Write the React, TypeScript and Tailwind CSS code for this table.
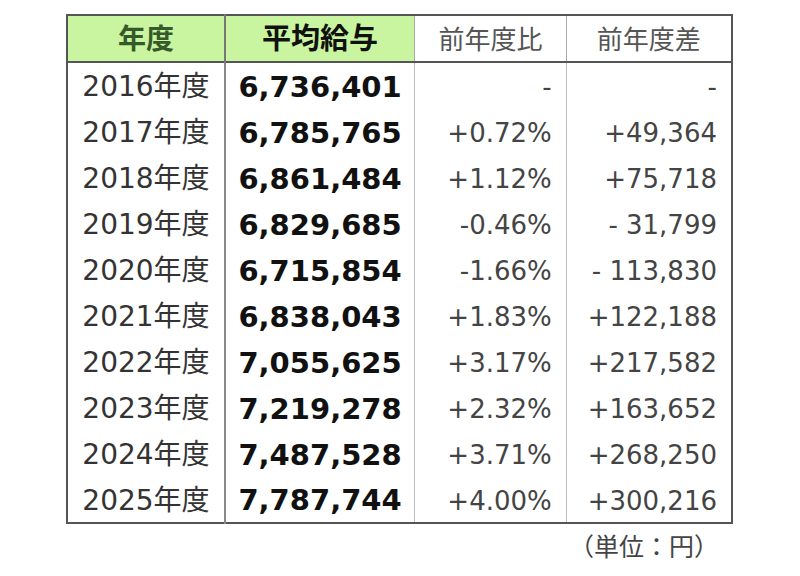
import React from "react";

const rows: [string, string, string, string][] = [
  ["2016", "6,736,401", "-", "-"],
  ["2017", "6,785,765", "+0.72%", "+49,364"],
  ["2018", "6,861,484", "+1.12%", "+75,718"],
  ["2019", "6,829,685", "-0.46%", "- 31,799"],
  ["2020", "6,715,854", "-1.66%", "- 113,830"],
  ["2021", "6,838,043", "+1.83%", "+122,188"],
  ["2022", "7,055,625", "+3.17%", "+217,582"],
  ["2023", "7,219,278", "+2.32%", "+163,652"],
  ["2024", "7,487,528", "+3.71%", "+268,250"],
  ["2025", "7,787,744", "+4.00%", "+300,216"],
];

const font = { fontFamily: '"DejaVu Sans", "Noto Sans CJK JP", sans-serif' };

export default function App() {
  return (
    <div className="w-[800px] h-[576px] bg-white pt-[14px] pl-[66px]" style={font}>
      <div className="w-[667px]">
        <table className="table-fixed border-collapse border-2 border-[#555]">
          <colgroup>
            <col className="w-[159px]" />
            <col className="w-[190px]" />
            <col className="w-[152px]" />
            <col className="w-[166px]" />
          </colgroup>
          <thead>
            <tr className="h-[47px] border-b-2 border-[#555]">
              <th className="bg-[#c9f5a0] border-r-2 border-[#777] text-[28px] font-bold text-[#35592a] text-center p-0 pt-[2px] leading-none">
                年度
              </th>
              <th className="bg-[#c9f5a0] border-r border-[#aaa] text-[29px] font-bold text-[#111] text-center p-0 pt-[2px] leading-none">
                平均給与
              </th>
              <th className="border-r border-[#aaa] text-[26px] font-normal text-[#555] text-center p-0 pt-[2px] leading-none">
                前年度比
              </th>
              <th className="text-[26px] font-normal text-[#555] text-center p-0 pt-[2px] leading-none">
                前年度差
              </th>
            </tr>
          </thead>
          <tbody>
            {rows.map(([y, avg, ratio, diff], i) => (
              <tr key={y} className={i === 0 ? "h-[47px]" : "h-[46px]"}>
                <td className="border-r-2 border-[#888] text-center text-[28px] text-[#333] p-0 pt-[2px] leading-none">
                  {y}年度
                </td>
                <td className="border-r border-[#bbb] text-center text-[29px] font-bold text-[#111] p-0 pt-[2px] leading-none">
                  {avg}
                </td>
                <td className="border-r border-[#bbb] text-right pr-[14px] text-[26px] text-[#444] p-0 pt-[2px] leading-none">
                  {ratio}
                </td>
                <td className="text-right pr-[14px] text-[26px] text-[#444] p-0 pt-[2px] leading-none">
                  {diff}
                </td>
              </tr>
            ))}
          </tbody>
        </table>
        <div className="flex justify-end pr-[14px] pt-[9px] text-[25px] text-[#444] leading-none">
          <span style={{ fontFamily: '"Noto Sans CJK JP", sans-serif' }}>（単位：円）</span>
        </div>
      </div>
    </div>
  );
}
